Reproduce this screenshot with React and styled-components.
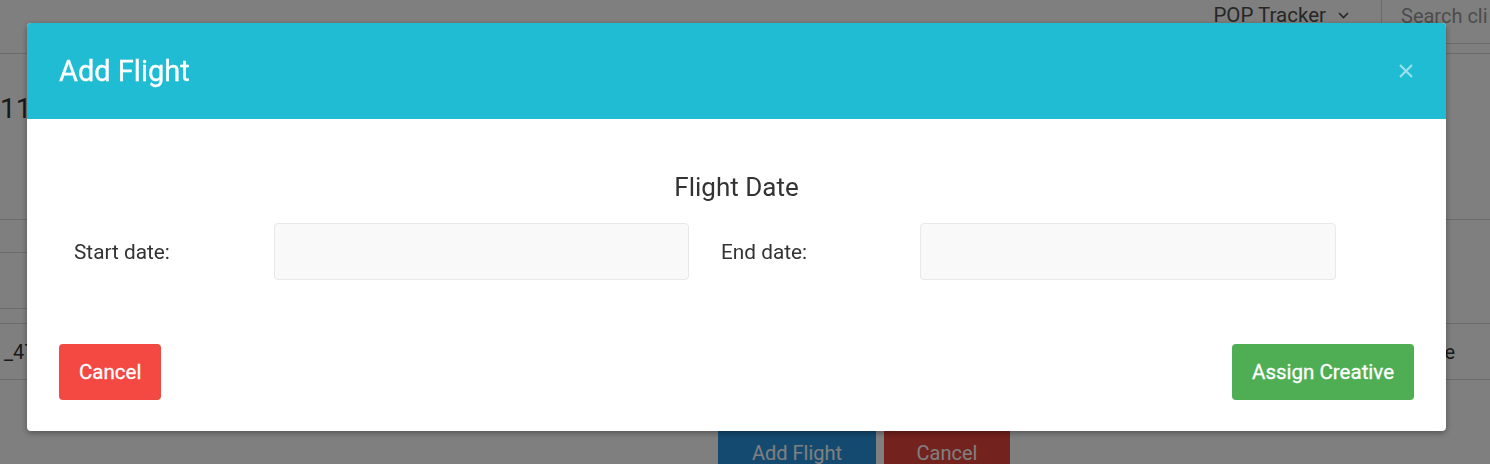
import React from 'react';
import styled, { createGlobalStyle } from 'styled-components';

const GlobalStyle = createGlobalStyle`
  html, body {
    margin: 0;
    padding: 0;
    background: #ffffff;
    font-family: Roboto, "Noto Sans", "Liberation Sans", sans-serif;
  }
  * { box-sizing: border-box; }
`;

/* ---------- page behind the dialog ---------- */

const Page = styled.div`
  width: 1490px;
  height: 464px;
  overflow: hidden;
  background: #fff;
  color: #333;
`;

const TopBar = styled.div`
  height: 54px;
  border-bottom: 1px solid #d6d6d6;
  display: flex;
  justify-content: flex-end;
  align-items: flex-start;
`;

const AppSwitch = styled.div`
  height: 30px;
  display: flex;
  align-items: center;
  gap: 12px;
  padding-right: 32px;
  font-size: 20.5px;
  color: #4d4d4d;
`;

const SearchBox = styled.div`
  width: 109px;
  height: 44px;
  border-left: 1px solid #d6d6d6;
  border-bottom: 1px solid #d6d6d6;
  padding: 4px 0 0 19px;
  font-size: 20px;
  color: #999;
  white-space: nowrap;
`;

const PageTitle = styled.div`
  height: 165px;
  padding-top: 38px;
  font-size: 28px;
  color: #333;
`;

const Table = styled.div`
  border-top: 1px solid #d6d6d6;
`;

const TableBlock = styled.div`
  height: 104px;
  border-bottom: 1px solid #d6d6d6;
  display: flex;
  flex-direction: column;
`;

const SubLine = styled.div`
  width: 600px;
  height: ${({ h }) => h}px;
  border-bottom: 1px solid #d6d6d6;
`;

const TableRow = styled.div`
  height: 56px;
  border-bottom: 1px solid #d6d6d6;
  display: flex;
  justify-content: space-between;
  align-items: center;
  padding: 0 35px 0 4px;
  font-size: 20px;
  color: #333;
`;

const Actions = styled.div`
  display: flex;
  justify-content: center;
  gap: 8px;
  padding: 45px 0 0 238px;
`;

const PageButton = styled.div`
  width: ${({ w }) => w}px;
  height: 56px;
  background: ${({ bg }) => bg};
  color: #fff;
  font-size: 20px;
  display: flex;
  align-items: center;
  justify-content: center;
  border-radius: 4px;
`;

/* ---------- dialog ---------- */

const Overlay = styled.div`
  position: fixed;
  inset: 0;
  background: rgba(0, 0, 0, 0.5);
`;

const Modal = styled.div`
  position: fixed;
  left: 27px;
  top: 23px;
  width: 1419px;
  background: #fff;
  border-radius: 4px;
  overflow: hidden;
  box-shadow: 0 2px 6px rgba(0, 0, 0, 0.35);
`;

const Header = styled.div`
  height: 96px;
  background: #20bcd3;
  display: flex;
  align-items: center;
  justify-content: space-between;
  padding: 0 32px;
`;

const Title = styled.h2`
  margin: 0;
  font-size: 29px;
  font-weight: 400;
  color: #fff;
  -webkit-text-stroke: 0.3px #fff;
`;

const CloseButton = styled.button`
  border: 0;
  background: none;
  padding: 0;
  width: 16px;
  height: 16px;
  display: flex;
  cursor: pointer;
  opacity: 0.55;
`;

const Body = styled.div`
  padding: 53px 32px 0;
`;

const SectionTitle = styled.h3`
  margin: 0 0 21px;
  line-height: 30px;
  font-size: 26px;
  font-weight: 400;
  color: #333;
  text-align: center;
`;

const DateRow = styled.div`
  display: grid;
  grid-template-columns: 200px 445px 201px 446px;
  align-items: center;
`;

const Cell = styled.div`
  padding: 0 15px 0 ${({ inset }) => inset || 15}px;
`;

const Label = styled.label`
  font-size: 20.8px;
  color: #333;
`;

const DateInput = styled.input`
  display: block;
  width: 100%;
  height: 57px;
  background: #f9f9f9;
  border: 1px solid #e8e8e8;
  border-radius: 4px;
  outline: none;
`;

const Footer = styled.div`
  display: flex;
  justify-content: space-between;
  padding: 64px 32px 31px;
`;

const Button = styled.button`
  height: 56px;
  padding: 0 20px;
  border: 0;
  border-radius: 4px;
  background: ${({ variant }) => (variant === 'danger' ? '#f44842' : '#4fae54')};
  color: #fff;
  font-family: inherit;
  font-size: 20.5px;
  font-weight: 400;
  -webkit-text-stroke: 0.3px #fff;
  cursor: pointer;
`;

const Chevron = () => (
  <svg width="11" height="7" viewBox="0 0 11 7" fill="none">
    <path d="M1 1l4.5 4.5L10 1" stroke="#4d4d4d" strokeWidth="1.6" />
  </svg>
);

const App = () => (
  <>
    <GlobalStyle />
    <Page>
      <TopBar>
        <AppSwitch>
          POP Tracker
          <Chevron />
        </AppSwitch>
        <SearchBox>Search cli</SearchBox>
      </TopBar>
      <PageTitle>11</PageTitle>
      <Table>
        <TableBlock>
          <SubLine h={33} />
          <SubLine h={56} />
        </TableBlock>
        <TableRow>
          <span>_47</span>
          <span>Inactive</span>
        </TableRow>
      </Table>
      <Actions>
        <PageButton w={158} bg="#2a94e0">Add Flight</PageButton>
        <PageButton w={126} bg="#e8443c">Cancel</PageButton>
      </Actions>
    </Page>
    <Overlay />
    <Modal>
      <Header>
        <Title>Add Flight</Title>
        <CloseButton aria-label="Close">
          <svg width="16" height="16" viewBox="0 0 16 16">
            <path d="M2 2l12 12M14 2L2 14" stroke="#fff" strokeWidth="2.2" />
          </svg>
        </CloseButton>
      </Header>
      <Body>
        <SectionTitle>Flight Date</SectionTitle>
        <DateRow>
          <Cell><Label>Start date:</Label></Cell>
          <Cell><DateInput /></Cell>
          <Cell inset={17}><Label>End date:</Label></Cell>
          <Cell><DateInput /></Cell>
        </DateRow>
      </Body>
      <Footer>
        <Button variant="danger">Cancel</Button>
        <Button variant="success">Assign Creative</Button>
      </Footer>
    </Modal>
  </>
);

export default App;
